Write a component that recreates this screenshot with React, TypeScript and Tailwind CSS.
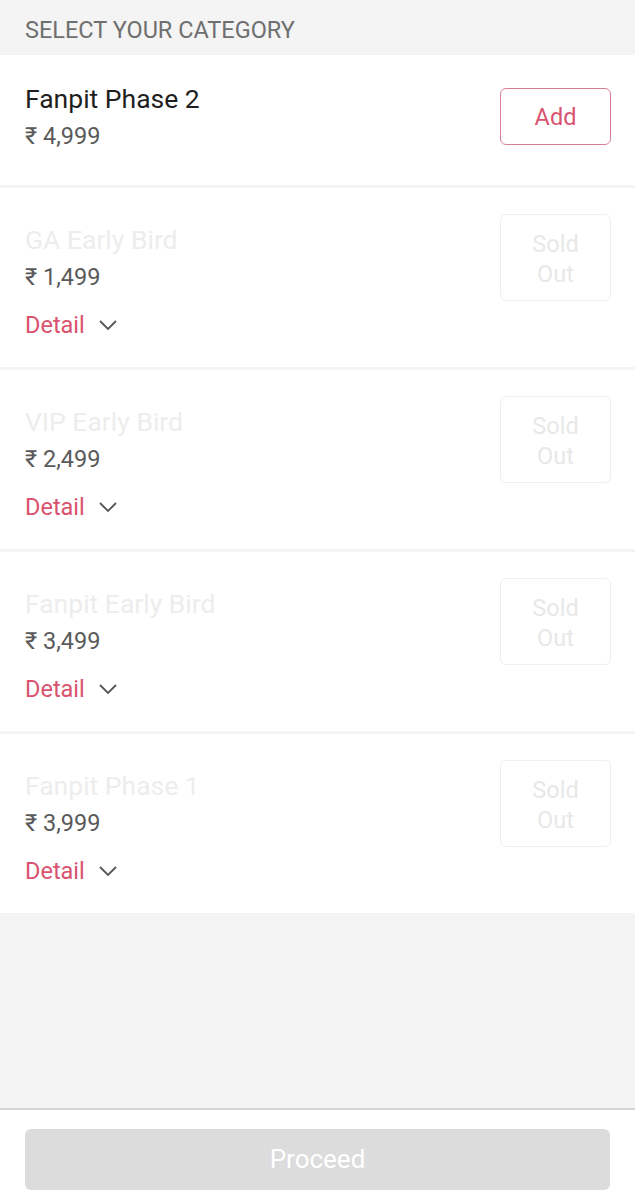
const soldOut = [
  { name: 'GA Early Bird', price: '1,499' },
  { name: 'VIP Early Bird', price: '2,499' },
  { name: 'Fanpit Early Bird', price: '3,499' },
  { name: 'Fanpit Phase 1', price: '3,999' },
];

function Chevron() {
  return (
    <svg className="h-[12px] w-[20px] text-[#555]" viewBox="0 0 20 12" fill="none">
      <path d="M2 2l8 8 8-8" stroke="currentColor" strokeWidth="1.8" />
    </svg>
  );
}

export default function App() {
  return (
    <div className="flex min-h-[1200px] flex-col bg-[#f4f4f4] font-['Roboto',sans-serif]">
      {/* Header */}
      <div className="flex h-[55px] items-center px-[25px] pt-[6px] text-[23.5px] text-[#6f6f6f]">
        SELECT YOUR CATEGORY
      </div>

      {/* Available */}
      <div className="flex h-[130px] items-start justify-between bg-white pl-[25px] pr-[24px]">
        <div className="pt-[25px]">
          <div className="text-[26.5px] leading-[38px] text-[#1f1f1f]">Fanpit Phase 2</div>
          <div className="text-[23.5px] leading-[36px] text-[#5a5a5a]">₹ 4,999</div>
        </div>
        <button className="mt-[33px] flex h-[57px] w-[111px] items-center justify-center rounded-[6px] border-[1.5px] border-[#d97f93] pt-[3px] text-[23.5px] text-[#d9536f]">
          Add
        </button>
      </div>

      {/* Sold out */}
      {soldOut.map((t) => (
        <div
          key={t.name}
          className="mt-[3px] flex h-[179px] items-start justify-between bg-white pl-[25px] pr-[24px] first:mt-[4px]"
        >
          <div className="pt-[34px]">
            <div className="text-[26.5px] leading-[36px] text-[#ededed]">{t.name}</div>
            <div className="text-[23.5px] leading-[38px] text-[#5a5a5a]">₹ {t.price}</div>
            <div className="mt-[11px] flex items-center gap-[13px]">
              <span className="text-[23.5px] leading-[36px] text-[#d9536f]">Detail</span>
              <Chevron />
            </div>
          </div>
          <div className="mt-[26px] flex h-[87px] w-[111px] flex-col items-center justify-center rounded-[6px] border-[1.5px] border-[#efefef] pt-[2px] text-[23.5px] leading-[30px] text-[#e8e8e8]">
            <span>Sold</span>
            <span>Out</span>
          </div>
        </div>
      ))}

      <div className="flex-1" />

      {/* Footer */}
      <div className="h-[92px] border-t-[2px] border-[#d6d6d6] bg-white px-[25px] pt-[19px]">
        <button className="flex h-[61px] w-full items-center justify-center rounded-[6px] bg-[#dcdcdc] text-[26px] text-white">
          Proceed
        </button>
      </div>
    </div>
  );
}
